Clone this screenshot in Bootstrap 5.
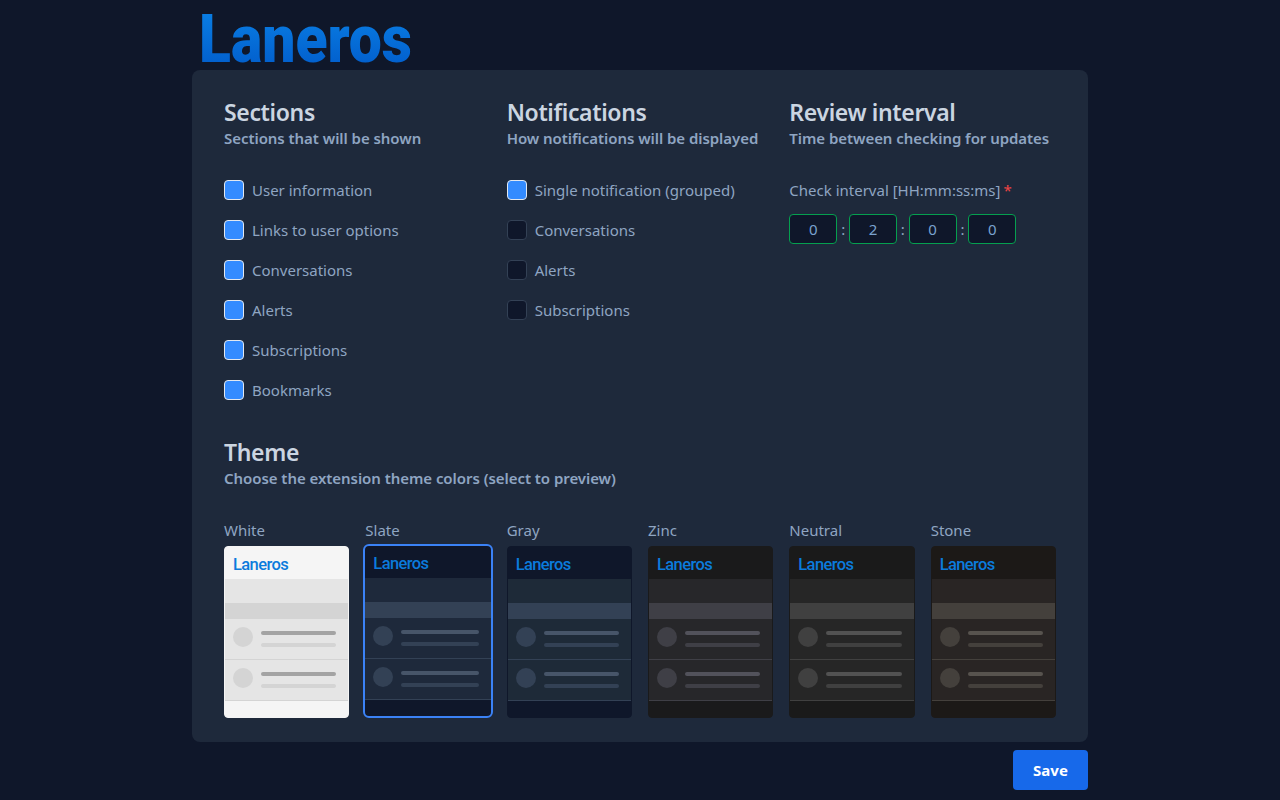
<!DOCTYPE html>
<html lang="en"><head><meta charset="utf-8"><title>Laneros</title>
<link href="https://cdn.jsdelivr.net/npm/bootstrap@5.3.0/dist/css/bootstrap.min.css" rel="stylesheet">
<style>
html,body{height:100%}
body{background:#0f172a;font-family:"Noto Sans",sans-serif;color:#8fa5c2;overflow:hidden}
.shell{width:896px;margin:0 auto}
.brand-wrap{height:70px;padding-left:7px}
.brand{display:block;margin-bottom:-14px}
.brand text{font-family:"Roboto",sans-serif;font-weight:900}
.panel{background:#1e293b;border-radius:8px;padding:26px 32px 24px;height:672px;position:relative}
.sec-title{font-size:23px;letter-spacing:-.35px;font-weight:600;line-height:32px;color:#cbd5e1;margin:0}
.sec-sub{font-size:15px;letter-spacing:-.05px;font-weight:600;line-height:20px;color:#8fa5c2;margin:0}
.opts{margin-top:22px;height:240px}
.opt{height:40px;display:flex;align-items:center;gap:8px;font-size:15px}
.opt .form-check-input{width:20px;height:20px;margin:0;flex:none;border-radius:4px;background-color:#0f172a;border:1px solid #334155;background-image:none}
.opt .form-check-input:checked{background-color:#338bff;border-color:#e2e8f0;background-image:none}
.req{color:#ef4444}
.time-lab{font-size:15px;height:40px;display:flex;align-items:center;gap:3px}
.times{display:flex;align-items:center;margin-top:4px;font-size:15px}
.times input{width:48px;height:30px;background:#0f172a;border:1px solid #059f4f;border-radius:4px;color:#7aa2cf;text-align:center;font-size:15px;padding:0;outline:0}
.times span{width:11.67px;text-align:center;line-height:24px}
.theme-sec{margin-top:26px}
.themes{margin-top:10px}
.th-name{font-size:15px;line-height:20px;height:32px;padding-top:6px}
.thumb{height:172px;border-radius:4px;overflow:hidden;display:flex;flex-direction:column;background:var(--h);border:1px solid var(--h)}
.thumb.sel{border:2px solid #3b82f6;border-radius:6px;margin:-2px -2px 0 -2px;height:174px}
.t-head{height:32px;display:flex;align-items:center;padding:5px 0 0 8px;font-family:"Roboto",sans-serif;font-weight:500;font-size:16.5px;letter-spacing:-.6px;color:#0b7bdc}
.t-band{height:24px;background:var(--b)}
.t-hi{height:16px;background:var(--c)}
.t-row{height:41px;background:var(--b);border-bottom:1px solid var(--c);display:flex;align-items:center;gap:8px;padding:0 12px 4px 8px}
.t-av{width:20px;height:20px;border-radius:50%;background:var(--c);flex:none}
.t-lines{flex:1;display:flex;flex-direction:column;gap:8px;margin-top:4px}
.t-l1,.t-l2{height:4px;border-radius:2px}
.t-l1{background:var(--l)}
.t-l2{background:var(--c)}
.save-row{display:flex;justify-content:flex-end;margin-top:8px}
.save-btn{width:75px;height:40px;background:#1769ea;border:0;border-radius:4px;color:#fff;font-weight:700;font-size:15px}
</style></head>
<body>
<div class="shell">
<div class="brand-wrap">
<svg class="brand" width="270" height="84" role="img" aria-label="Laneros"><defs><linearGradient id="lg" x1="0" y1="0" x2="0" y2="1"><stop offset="0" stop-color="#0b84e8"/><stop offset="1" stop-color="#0058c8"/></linearGradient></defs><text x="0" y="62" font-size="66" textLength="213" lengthAdjust="spacingAndGlyphs" fill="url(#lg)">Laneros</text></svg>
</div>
<div class="panel">
<div class="row row-cols-3 g-3">
<div class="col">
<h2 class="sec-title">Sections</h2><p class="sec-sub">Sections that will be shown</p>
<div class="opts">
<label class="opt"><input class="form-check-input" type="checkbox" checked>User information</label>
<label class="opt"><input class="form-check-input" type="checkbox" checked>Links to user options</label>
<label class="opt"><input class="form-check-input" type="checkbox" checked>Conversations</label>
<label class="opt"><input class="form-check-input" type="checkbox" checked>Alerts</label>
<label class="opt"><input class="form-check-input" type="checkbox" checked>Subscriptions</label>
<label class="opt"><input class="form-check-input" type="checkbox" checked>Bookmarks</label>
</div></div>
<div class="col">
<h2 class="sec-title">Notifications</h2><p class="sec-sub">How notifications will be displayed</p>
<div class="opts">
<label class="opt"><input class="form-check-input" type="checkbox" checked>Single notification (grouped)</label>
<label class="opt"><input class="form-check-input" type="checkbox">Conversations</label>
<label class="opt"><input class="form-check-input" type="checkbox">Alerts</label>
<label class="opt"><input class="form-check-input" type="checkbox">Subscriptions</label>
</div></div>
<div class="col">
<h2 class="sec-title">Review interval</h2><p class="sec-sub">Time between checking for updates</p>
<div class="opts">
<div class="time-lab">Check interval [HH:mm:ss:ms] <span class="req">*</span></div>
<div class="times"><input value="0" aria-label="Hours"><span>:</span><input value="2" aria-label="Minutes"><span>:</span><input value="0" aria-label="Seconds"><span>:</span><input value="0" aria-label="Milliseconds"></div>
</div></div>
</div>
<div class="theme-sec">
<h2 class="sec-title">Theme</h2><p class="sec-sub">Choose the extension theme colors (select to preview)</p>
<div class="row row-cols-6 g-3 themes">
<div class="col"><div class="th-name">White</div><div class="thumb" style="--h:#f5f5f5;--b:#e5e5e5;--c:#d4d4d4;--l:#a3a3a3"><div class="t-head">Laneros</div><div class="t-band"></div><div class="t-hi"></div><div class="t-row"><div class="t-av"></div><div class="t-lines"><div class="t-l1"></div><div class="t-l2"></div></div></div><div class="t-row"><div class="t-av"></div><div class="t-lines"><div class="t-l1"></div><div class="t-l2"></div></div></div></div></div>
<div class="col"><div class="th-name">Slate</div><div class="thumb sel" style="--h:#0f172a;--b:#1e293b;--c:#334155;--l:#475569"><div class="t-head">Laneros</div><div class="t-band"></div><div class="t-hi"></div><div class="t-row"><div class="t-av"></div><div class="t-lines"><div class="t-l1"></div><div class="t-l2"></div></div></div><div class="t-row"><div class="t-av"></div><div class="t-lines"><div class="t-l1"></div><div class="t-l2"></div></div></div></div></div>
<div class="col"><div class="th-name">Gray</div><div class="thumb" style="--h:#0f172a;--b:#1e2a38;--c:#334155;--l:#475569"><div class="t-head">Laneros</div><div class="t-band"></div><div class="t-hi"></div><div class="t-row"><div class="t-av"></div><div class="t-lines"><div class="t-l1"></div><div class="t-l2"></div></div></div><div class="t-row"><div class="t-av"></div><div class="t-lines"><div class="t-l1"></div><div class="t-l2"></div></div></div></div></div>
<div class="col"><div class="th-name">Zinc</div><div class="thumb" style="--h:#1a1a1b;--b:#27272a;--c:#3f3f46;--l:#52525b"><div class="t-head">Laneros</div><div class="t-band"></div><div class="t-hi"></div><div class="t-row"><div class="t-av"></div><div class="t-lines"><div class="t-l1"></div><div class="t-l2"></div></div></div><div class="t-row"><div class="t-av"></div><div class="t-lines"><div class="t-l1"></div><div class="t-l2"></div></div></div></div></div>
<div class="col"><div class="th-name">Neutral</div><div class="thumb" style="--h:#1a1a1a;--b:#262626;--c:#404040;--l:#525252"><div class="t-head">Laneros</div><div class="t-band"></div><div class="t-hi"></div><div class="t-row"><div class="t-av"></div><div class="t-lines"><div class="t-l1"></div><div class="t-l2"></div></div></div><div class="t-row"><div class="t-av"></div><div class="t-lines"><div class="t-l1"></div><div class="t-l2"></div></div></div></div></div>
<div class="col"><div class="th-name">Stone</div><div class="thumb" style="--h:#1c1917;--b:#292524;--c:#44403c;--l:#57534e"><div class="t-head">Laneros</div><div class="t-band"></div><div class="t-hi"></div><div class="t-row"><div class="t-av"></div><div class="t-lines"><div class="t-l1"></div><div class="t-l2"></div></div></div><div class="t-row"><div class="t-av"></div><div class="t-lines"><div class="t-l1"></div><div class="t-l2"></div></div></div></div></div>
</div></div>
</div>
<div class="save-row"><button class="btn save-btn" type="button">Save</button></div>
</div>
<script src="https://cdn.jsdelivr.net/npm/bootstrap@5.3.0/dist/js/bootstrap.bundle.min.js"></script>
</body></html>
